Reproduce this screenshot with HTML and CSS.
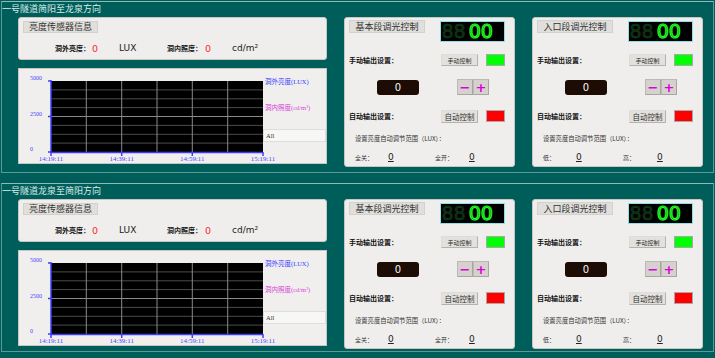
FILE: index.html
```html
<!DOCTYPE html>
<html>
<head>
    <meta charset="utf-8">
    <link rel="stylesheet" href="styles.css">
</head>
<body>
    <section class="group">
        <div class="group-title">一号隧道简阳至龙泉方向</div>
        <div class="group-body">
            <div class="sensor-col">
                <div class="panel sensor-panel">
                    <div class="caption">亮度传感器信息</div>
                    <div class="reading">
                        <span class="reading-label">洞外亮度：</span><span class="reading-value">0</span><span class="reading-unit">LUX</span>
                        <span class="reading-label">洞内照度：</span><span class="reading-value">0</span><span class="reading-unit">cd/m²</span>
                    </div>
                </div>
                <div class="panel chart-panel">
                    <svg class="chart" width="307" height="94" viewBox="0 0 307 94">
                        <rect x="32" y="12" width="212" height="71" fill="#000"/>
                        <g stroke="#4c4c4c" stroke-width="1">
                            <line x1="32" y1="20.9" x2="244" y2="20.9"/>
                            <line x1="32" y1="29.8" x2="244" y2="29.8"/>
                            <line x1="32" y1="38.6" x2="244" y2="38.6"/>
                            <line x1="32" y1="56.4" x2="244" y2="56.4"/>
                            <line x1="32" y1="65.3" x2="244" y2="65.3"/>
                            <line x1="32" y1="74.1" x2="244" y2="74.1"/>
                        </g>
                        <g stroke="#8a8a8a" stroke-width="1">
                            <line x1="32" y1="47.5" x2="244" y2="47.5"/>
                            <line x1="67.3" y1="12" x2="67.3" y2="83"/>
                            <line x1="102.7" y1="12" x2="102.7" y2="83"/>
                            <line x1="138" y1="12" x2="138" y2="83"/>
                            <line x1="173.3" y1="12" x2="173.3" y2="83"/>
                            <line x1="208.7" y1="12" x2="208.7" y2="83"/>
                        </g>
                        <g stroke="#3c3cff" stroke-width="1.5">
                            <line x1="32" y1="11" x2="32" y2="84"/>
                            <line x1="32" y1="83.5" x2="244" y2="83.5"/>
                            <line x1="29" y1="12" x2="32" y2="12"/>
                            <line x1="29" y1="47.5" x2="32" y2="47.5"/>
                            <line x1="29" y1="83" x2="32" y2="83"/>
                            <line x1="102.7" y1="83" x2="102.7" y2="87"/>
                            <line x1="173.3" y1="83" x2="173.3" y2="87"/>
                            <line x1="244" y1="83" x2="244" y2="87"/>
                            <line x1="32" y1="83" x2="32" y2="87"/>
                        </g>
                        <g class="axis-text" font-size="6">
                            <text x="11" y="11">5000</text>
                            <text x="11" y="47">2500</text>
                            <text x="11" y="82">0</text>
                        </g>
                        <g class="axis-text" font-size="7" text-anchor="middle">
                            <text x="32" y="92">14:19:11</text>
                            <text x="102.7" y="92">14:39:11</text>
                            <text x="173.3" y="92">14:59:11</text>
                            <text x="244" y="92">15:19:11</text>
                        </g>
                        <text class="legend legend-out" x="246" y="14.5">洞外亮度(LUX)</text>
                        <text class="legend legend-in" x="246" y="41">洞内照度(cd/m²)</text>
                        <rect x="244.5" y="60.5" width="62" height="12" fill="#f7f7f6" stroke="#dedede"/>
                        <text class="legend legend-all" x="247" y="69">All</text>
                    </svg>
                </div>
            </div>

            <div class="panel ctl-panel">
                <div class="ctl-head">
                    <div class="caption caption-ctl">基本段调光控制</div>
                    <div class="seg"><span class="seg-dim">88</span><span class="seg-on">00</span></div>
                </div>
                <div class="ctl-row">
                    <span class="ctl-label">手动输出设置：</span>
                    <button class="btn btn-small">手动控制</button>
                    <span class="lamp lamp-on"></span>
                </div>
                <div class="ctl-row ctl-adjust">
                    <span class="level">0</span>
                    <span class="stepper"><button class="step">−</button><button class="step">+</button></span>
                </div>
                <div class="ctl-row ctl-row-auto">
                    <span class="ctl-label">自动输出设置：</span>
                    <button class="btn">自动控制</button>
                    <span class="lamp lamp-off"></span>
                </div>
                <div class="ctl-note">设置亮度自动调节范围（LUX）：</div>
                <div class="ctl-range">
                    <span>全关：</span><span class="range-value">0</span><span>全开：</span><span class="range-value">0</span>
                </div>
            </div>

            <div class="panel ctl-panel">
                <div class="ctl-head">
                    <div class="caption caption-ctl">入口段调光控制</div>
                    <div class="seg"><span class="seg-dim">88</span><span class="seg-on">00</span></div>
                </div>
                <div class="ctl-row">
                    <span class="ctl-label">手动输出设置：</span>
                    <button class="btn btn-small">手动控制</button>
                    <span class="lamp lamp-on"></span>
                </div>
                <div class="ctl-row ctl-adjust">
                    <span class="level">0</span>
                    <span class="stepper"><button class="step">−</button><button class="step">+</button></span>
                </div>
                <div class="ctl-row ctl-row-auto">
                    <span class="ctl-label">自动输出设置：</span>
                    <button class="btn">自动控制</button>
                    <span class="lamp lamp-off"></span>
                </div>
                <div class="ctl-note">设置亮度自动调节范围（LUX）：</div>
                <div class="ctl-range">
                    <span>低：</span><span class="range-value">0</span><span>高：</span><span class="range-value">0</span>
                </div>
            </div>
        </div>
    </section>

    <section class="group group-second">
        <div class="group-title">一号隧道龙泉至简阳方向</div>
        <div class="group-body">
            <div class="sensor-col">
                <div class="panel sensor-panel">
                    <div class="caption">亮度传感器信息</div>
                    <div class="reading">
                        <span class="reading-label">洞外亮度：</span><span class="reading-value">0</span><span class="reading-unit">LUX</span>
                        <span class="reading-label">洞内照度：</span><span class="reading-value">0</span><span class="reading-unit">cd/m²</span>
                    </div>
                </div>
                <div class="panel chart-panel">
                    <svg class="chart" width="307" height="94" viewBox="0 0 307 94">
                        <rect x="32" y="12" width="212" height="71" fill="#000"/>
                        <g stroke="#4c4c4c" stroke-width="1">
                            <line x1="32" y1="20.9" x2="244" y2="20.9"/>
                            <line x1="32" y1="29.8" x2="244" y2="29.8"/>
                            <line x1="32" y1="38.6" x2="244" y2="38.6"/>
                            <line x1="32" y1="56.4" x2="244" y2="56.4"/>
                            <line x1="32" y1="65.3" x2="244" y2="65.3"/>
                            <line x1="32" y1="74.1" x2="244" y2="74.1"/>
                        </g>
                        <g stroke="#8a8a8a" stroke-width="1">
                            <line x1="32" y1="47.5" x2="244" y2="47.5"/>
                            <line x1="67.3" y1="12" x2="67.3" y2="83"/>
                            <line x1="102.7" y1="12" x2="102.7" y2="83"/>
                            <line x1="138" y1="12" x2="138" y2="83"/>
                            <line x1="173.3" y1="12" x2="173.3" y2="83"/>
                            <line x1="208.7" y1="12" x2="208.7" y2="83"/>
                        </g>
                        <g stroke="#3c3cff" stroke-width="1.5">
                            <line x1="32" y1="11" x2="32" y2="84"/>
                            <line x1="32" y1="83.5" x2="244" y2="83.5"/>
                            <line x1="29" y1="12" x2="32" y2="12"/>
                            <line x1="29" y1="47.5" x2="32" y2="47.5"/>
                            <line x1="29" y1="83" x2="32" y2="83"/>
                            <line x1="102.7" y1="83" x2="102.7" y2="87"/>
                            <line x1="173.3" y1="83" x2="173.3" y2="87"/>
                            <line x1="244" y1="83" x2="244" y2="87"/>
                            <line x1="32" y1="83" x2="32" y2="87"/>
                        </g>
                        <g class="axis-text" font-size="6">
                            <text x="11" y="11">5000</text>
                            <text x="11" y="47">2500</text>
                            <text x="11" y="82">0</text>
                        </g>
                        <g class="axis-text" font-size="7" text-anchor="middle">
                            <text x="32" y="92">14:19:11</text>
                            <text x="102.7" y="92">14:39:11</text>
                            <text x="173.3" y="92">14:59:11</text>
                            <text x="244" y="92">15:19:11</text>
                        </g>
                        <text class="legend legend-out" x="246" y="14.5">洞外亮度(LUX)</text>
                        <text class="legend legend-in" x="246" y="41">洞内照度(cd/m²)</text>
                        <rect x="244.5" y="60.5" width="62" height="12" fill="#f7f7f6" stroke="#dedede"/>
                        <text class="legend legend-all" x="247" y="69">All</text>
                    </svg>
                </div>
            </div>

            <div class="panel ctl-panel">
                <div class="ctl-head">
                    <div class="caption caption-ctl">基本段调光控制</div>
                    <div class="seg"><span class="seg-dim">88</span><span class="seg-on">00</span></div>
                </div>
                <div class="ctl-row">
                    <span class="ctl-label">手动输出设置：</span>
                    <button class="btn btn-small">手动控制</button>
                    <span class="lamp lamp-on"></span>
                </div>
                <div class="ctl-row ctl-adjust">
                    <span class="level">0</span>
                    <span class="stepper"><button class="step">−</button><button class="step">+</button></span>
                </div>
                <div class="ctl-row ctl-row-auto">
                    <span class="ctl-label">自动输出设置：</span>
                    <button class="btn">自动控制</button>
                    <span class="lamp lamp-off"></span>
                </div>
                <div class="ctl-note">设置亮度自动调节范围（LUX）：</div>
                <div class="ctl-range">
                    <span>全关：</span><span class="range-value">0</span><span>全开：</span><span class="range-value">0</span>
                </div>
            </div>

            <div class="panel ctl-panel">
                <div class="ctl-head">
                    <div class="caption caption-ctl">入口段调光控制</div>
                    <div class="seg"><span class="seg-dim">88</span><span class="seg-on">00</span></div>
                </div>
                <div class="ctl-row">
                    <span class="ctl-label">手动输出设置：</span>
                    <button class="btn btn-small">手动控制</button>
                    <span class="lamp lamp-on"></span>
                </div>
                <div class="ctl-row ctl-adjust">
                    <span class="level">0</span>
                    <span class="stepper"><button class="step">−</button><button class="step">+</button></span>
                </div>
                <div class="ctl-row ctl-row-auto">
                    <span class="ctl-label">自动输出设置：</span>
                    <button class="btn">自动控制</button>
                    <span class="lamp lamp-off"></span>
                </div>
                <div class="ctl-note">设置亮度自动调节范围（LUX）：</div>
                <div class="ctl-range">
                    <span>低：</span><span class="range-value">0</span><span>高：</span><span class="range-value">0</span>
                </div>
            </div>
        </div>
    </section>
</body>
</html>
```

FILE: styles.css
```css
body {
    margin: 0;
    width: 715px;
    height: 358px;
    overflow: hidden;
    background-color: #005e5a;
    font-family: "Noto Sans CJK SC", sans-serif;
    color: #222;
}

/* group boxes */
.group {
    box-sizing: border-box;
    width: 713px;
    height: 172px;
    margin: 1px 0 0 1px;
    border: 1px solid #5d9a96;
    border-top-color: #8fbab6;
}

.group-second {
    height: 169px;
    margin-top: 10px;
}

.group-title {
    height: 15px;
    font-size: 9px;
    line-height: 13px;
    color: #dcecea;
}

.group-body {
    display: flex;
    align-items: flex-start;
    gap: 17px;
    padding-left: 16px;
}

.panel {
    box-sizing: border-box;
    background-color: #efeeec;
    border: 1px solid #c6c6c4;
}

.caption {
    box-sizing: border-box;
    width: 75px;
    height: 12px;
    background-color: #e1dfdb;
    border: 1px solid #d3d1cd;
    font-size: 9px;
    line-height: 10px;
    text-align: center;
    color: #333;
}

/* sensor column */
.sensor-col {
    display: flex;
    flex-direction: column;
    gap: 8px;
    width: 309px;
}

.sensor-panel {
    height: 43px;
    padding: 3px 4px;
    border-radius: 3px;
}

.reading {
    display: grid;
    grid-template-columns: 37px 27px 48px 38px 27px auto;
    align-items: center;
    height: 12px;
    margin-top: 9px;
    padding-left: 32px;
}

.reading-label {
    font-size: 7px;
    font-weight: 700;
    color: #111;
}

.reading-value {
    font-family: "DejaVu Sans", sans-serif;
    font-size: 9.5px;
    color: #ff2a2a;
}

.reading-unit {
    font-family: "DejaVu Sans", sans-serif;
    font-size: 9px;
    color: #222;
}

.chart-panel {
    height: 96px;
    background-color: #f0efee;
}

.chart {
    display: block;
}

.axis-text {
    font-family: "Liberation Serif", serif;
    fill: #4646ff;
}

.legend {
    font-family: "Liberation Serif", "Noto Sans CJK SC", serif;
    font-size: 6.5px;
}

.legend-out { fill: #3a3aff; }
.legend-in { fill: #d846d8; }
.legend-all { fill: #333; }

/* dimming control panels */
.ctl-panel {
    width: 171px;
    height: 150px;
    border-radius: 3px;
}

.ctl-head {
    display: flex;
    justify-content: space-between;
    align-items: flex-start;
    height: 26px;
    padding: 2px 9px 0 4px;
}

.caption-ctl {
    width: 76px;
    height: 13px;
    line-height: 11px;
}

.seg {
    box-sizing: border-box;
    width: 65px;
    height: 21px;
    margin-top: 1px;
    padding-left: 1px;
    background-color: #000;
    border: 1px solid #86e2ea;
    font-family: "Liberation Sans", sans-serif;
    font-size: 20px;
    line-height: 19px;
    letter-spacing: 1px;
    white-space: nowrap;
}

.seg-dim {
    color: #0b280d;
    -webkit-text-stroke: 0.6px #15401a;
}

.seg-on {
    margin-left: 3px;
    color: #0c6a10;
    -webkit-text-stroke: 1.2px #22ff22;
}

.ctl-row {
    display: flex;
    align-items: center;
    height: 28px;
    padding: 0 9px 0 4px;
}

.ctl-row-auto {
    height: 32px;
}

.ctl-label {
    margin-right: auto;
    font-size: 7px;
    font-weight: 700;
    color: #111;
}

.btn {
    box-sizing: border-box;
    width: 37px;
    height: 13px;
    padding: 0;
    background-color: #e3e1dd;
    border: 1px solid #b4b2ae;
    border-top-color: #dedcd8;
    border-left-color: #dedcd8;
    border-radius: 1px;
    font-family: "Noto Sans CJK SC", sans-serif;
    font-size: 7.5px;
    line-height: 11px;
    color: #333;
}

.btn-small {
    height: 12px;
    font-size: 6px;
}

.lamp {
    box-sizing: border-box;
    width: 19px;
    height: 12px;
    margin-left: 8px;
    border: 1px solid #a8a8a8;
}

.lamp-on { background-color: #00ff00; }
.lamp-off { background-color: #ff0000; }

.ctl-adjust {
    height: 26px;
}

.level {
    box-sizing: border-box;
    width: 42px;
    height: 15px;
    margin-left: 28px;
    background-color: #1c0c04;
    border-radius: 3px;
    font-family: "DejaVu Sans", sans-serif;
    font-size: 10px;
    line-height: 15px;
    text-align: center;
    color: #f4f4f4;
}

.stepper {
    display: flex;
    margin-left: 38px;
}

.step {
    box-sizing: border-box;
    width: 16px;
    height: 16px;
    padding: 0;
    background-color: #d5d2cd;
    border: 1px solid #bdbab5;
    border-bottom-color: #a9a6a1;
    border-right-color: #a9a6a1;
    font-family: "DejaVu Sans", sans-serif;
    font-size: 13px;
    font-weight: 700;
    line-height: 13px;
    color: #dc00dc;
}

.ctl-note {
    height: 13px;
    padding-left: 10px;
    font-size: 6.3px;
    line-height: 13px;
    color: #333;
}

.ctl-range {
    display: grid;
    grid-template-columns: 33px 47px 34px auto;
    align-items: center;
    height: 24px;
    padding-left: 10px;
    font-size: 6px;
    color: #333;
}

.range-value {
    font-family: "DejaVu Sans", sans-serif;
    font-size: 9px;
    text-decoration: underline;
    color: #222;
}
```
